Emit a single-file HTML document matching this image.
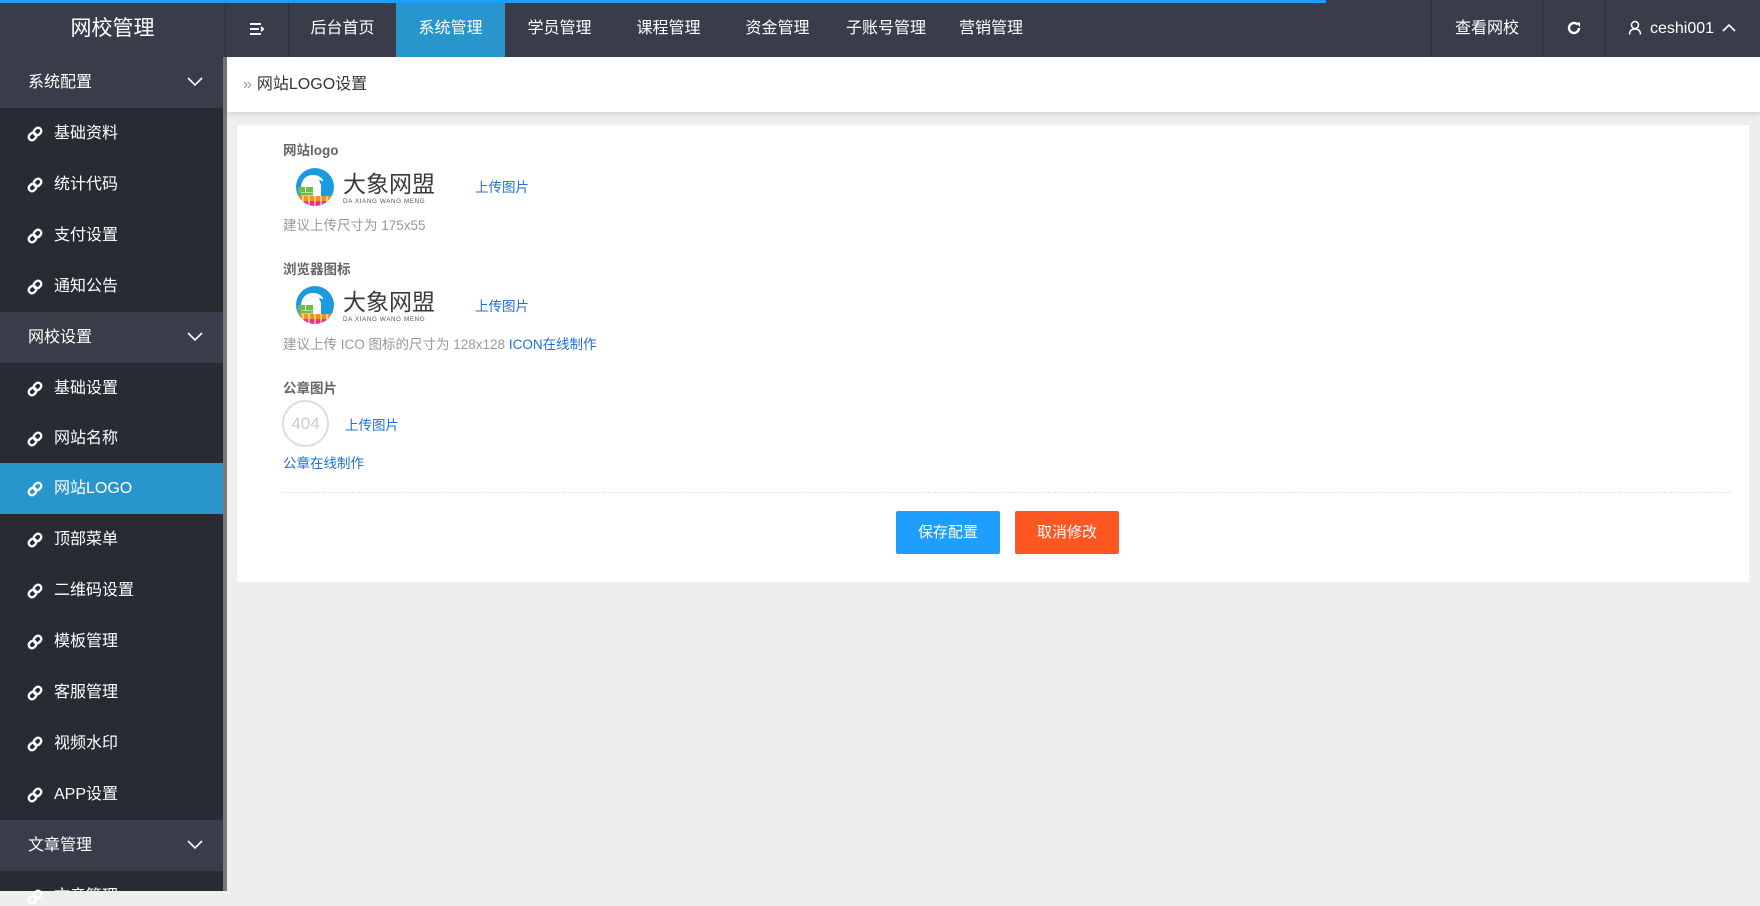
<!DOCTYPE html>
<html><head><meta charset="utf-8"><style>
*{margin:0;padding:0;box-sizing:border-box}
body{width:1760px;height:891px;overflow:hidden;background:#eeeeee;font-family:"Liberation Sans","Noto Sans CJK SC",sans-serif;position:relative}
.abs{position:absolute}
#hdr{left:0;top:0;width:1760px;height:57px;background:#393D49}
#bar{left:0;top:0;width:1326px;height:3px;background:#1E9FFF;z-index:5}
.nav{top:0;height:57px;color:#fff;font-size:16px;line-height:57px;text-align:center}
.sep{border-left:1px solid #2d303a}
#side{left:0;top:57px;width:223px;height:834px;background:#282B33;overflow:hidden}
.row{position:absolute;left:0;width:223px;height:51px;line-height:51px;color:#fff;font-size:16px}
.grp{background:#393D49;padding-left:28px}
.item{padding-left:54px}
.act{background:#2896CC}
.chev{position:absolute;right:20px;top:18px}
.lbl{position:absolute;left:283px;font-size:13.5px;font-weight:bold;color:#666}
.hint{position:absolute;left:283px;font-size:13.5px;color:#999}
.blue{color:#1E6FD9}
.up{position:absolute;font-size:13.5px;color:#1E6FD9}
.btn{position:absolute;top:511px;width:104px;height:43px;line-height:43px;text-align:center;color:#fff;font-size:15px;border-radius:2px}
</style></head><body>
<div id="bar" class="abs"></div>
<div id="hdr" class="abs"></div>
<div class="abs nav" style="left:0;width:225px;font-size:21px">网校管理</div>
<div class="abs nav sep" style="left:225px;width:63px"><svg width="16" height="14" style="margin-top:22px" viewBox="0 0 16 14"><path d="M1 2h11M1 7h9M1 12h11M12 5l2 2-2 2" stroke="#fff" stroke-width="2" fill="none"/></svg></div>
<div class="abs nav sep" style="left:288px;width:108px">后台首页</div>
<div class="abs nav" style="left:396px;width:109px;background:#2896CC">系统管理</div>
<div class="abs nav" style="left:505px;width:109px">学员管理</div>
<div class="abs nav" style="left:614px;width:109px">课程管理</div>
<div class="abs nav" style="left:723px;width:109px">资金管理</div>
<div class="abs nav" style="left:832px;width:108px">子账号管理</div>
<div class="abs nav" style="left:940px;width:102px">营销管理</div>
<div class="abs nav sep" style="left:1431px;width:111px">查看网校</div>
<div class="abs nav sep" style="left:1542px;width:63px"><svg width="16" height="16" style="margin-top:20px" viewBox="0 0 16 16"><path d="M13 8a5 5 0 1 1-1.5-3.6" stroke="#fff" stroke-width="2.4" fill="none"/><path d="M9.5 2.5h4.5v4.5z" fill="#fff"/></svg></div>
<div class="abs nav sep" style="left:1605px;width:155px;text-align:left;padding-left:22px"><svg width="14" height="15" viewBox="0 0 14 15" style="vertical-align:-2px;margin-right:8px"><circle cx="7" cy="5" r="3.5" stroke="#fff" stroke-width="1.5" fill="none"/><path d="M1.5 14.5c0-4 2.5-5.5 5.5-5.5s5.5 1.5 5.5 5.5" stroke="#fff" stroke-width="1.5" fill="none"/></svg>ceshi001<svg width="14" height="10" viewBox="0 0 14 10" style="margin-left:8px"><path d="M1 8l6-6 6 6" stroke="#fff" stroke-width="1.6" fill="none"/></svg></div>

<div id="side" class="abs">
<div class="row grp" style="top:0">系统配置<svg class="chev" width="16" height="12" viewBox="0 0 16 12"><path d="M1 3l7 7 7-7" stroke="#fff" stroke-width="1.6" fill="none"/></svg></div>
<div class="row item" style="top:51px">基础资料</div>
<div class="row item" style="top:102px">统计代码</div>
<div class="row item" style="top:153px">支付设置</div>
<div class="row item" style="top:204px">通知公告</div>
<div class="row grp" style="top:255px">网校设置<svg class="chev" width="16" height="12" viewBox="0 0 16 12"><path d="M1 3l7 7 7-7" stroke="#fff" stroke-width="1.6" fill="none"/></svg></div>
<div class="row item" style="top:306px">基础设置</div>
<div class="row item" style="top:356px">网站名称</div>
<div class="row item act" style="top:406px">网站LOGO</div>
<div class="row item" style="top:457px">顶部菜单</div>
<div class="row item" style="top:508px">二维码设置</div>
<div class="row item" style="top:559px">模板管理</div>
<div class="row item" style="top:610px">客服管理</div>
<div class="row item" style="top:661px">视频水印</div>
<div class="row item" style="top:712px">APP设置</div>
<div class="row grp" style="top:763px">文章管理<svg class="chev" width="16" height="12" viewBox="0 0 16 12"><path d="M1 3l7 7 7-7" stroke="#fff" stroke-width="1.6" fill="none"/></svg></div>
<div class="row item" style="top:814px">文章管理</div>
</div>
<div class="abs" style="left:223px;top:57px;width:4px;height:834px;background:#777"></div>

<div class="abs" style="left:227px;top:57px;width:1533px;height:55px;background:#fff;box-shadow:0 2px 5px rgba(0,0,0,.12)"></div>
<div class="abs" style="left:243px;top:57px;line-height:55px;font-size:16px;color:#333"><span style="color:#999;margin-right:5px">»</span>网站LOGO设置</div>

<svg width="0" height="0" style="position:absolute"><defs>
<clipPath id="c"><circle cx="20" cy="21" r="19"/></clipPath>
<symbol id="logo" viewBox="0 0 145 42"><g clip-path="url(#c)"><rect width="40" height="42" fill="#1a9be0"/><path d="M6 30V22c0-8 5-13 12-13 5 0 8 2 10 5v16z" fill="#fff"/><path d="M24 14c3 0 5 2 5 5v11h-3V19" fill="#1a9be0"/><rect x="3" y="21" width="7" height="5" fill="#6cbf3c"/><rect x="11" y="21" width="7" height="5" fill="#6cbf3c"/><rect x="3" y="26.5" width="15" height="3" fill="#6cbf3c"/><rect x="0" y="30" width="40" height="5" fill="#f39222"/><rect x="0" y="35.5" width="40" height="7" fill="#e4347f"/><path d="M8 30v12M14 30v12M20 30v12M26 30v12M32 30v12" stroke="#fff" stroke-width="1"/></g><text x="48" y="26" font-size="23" fill="#3a3a3a" font-family="Noto Sans CJK SC,sans-serif">大象网盟</text><text x="48" y="37" font-size="6.3" fill="#555" font-family="Liberation Sans" letter-spacing=".6">DA XIANG WANG MENG</text></symbol>
<symbol id="lk" viewBox="0 0 18 18"><g transform="rotate(-45 9 9)" stroke="#fff" stroke-width="2.4" fill="none"><rect x="1.5" y="5.8" width="8" height="6.4" rx="3.2"/><rect x="8.5" y="5.8" width="8" height="6.4" rx="3.2"/></g></symbol>
</defs></svg>

<div class="abs" style="left:237px;top:125px;width:1512px;height:457px;background:#fff"></div>
<div class="lbl" style="top:139px">网站logo</div>
<svg class="abs" style="left:295px;top:166px" width="145" height="42"><use href="#logo"/></svg>
<div class="up" style="left:475px;top:176px">上传图片</div>
<div class="hint" style="top:214px">建议上传尺寸为 175x55</div>
<div class="lbl" style="top:258px">浏览器图标</div>
<svg class="abs" style="left:295px;top:284px" width="145" height="42"><use href="#logo"/></svg>
<div class="up" style="left:475px;top:295px">上传图片</div>
<div class="hint" style="top:333px">建议上传 ICO 图标的尺寸为 128x128 <span class="blue">ICON在线制作</span></div>
<div class="lbl" style="top:377px">公章图片</div>
<div class="abs" style="left:282px;top:400px;width:47px;height:47px;border:2px solid #ddd;border-radius:50%;text-align:center;line-height:43px;color:#ccc;font-size:17px">404</div>
<div class="up" style="left:345px;top:414px">上传图片</div>
<div class="up" style="left:283px;top:452px">公章在线制作</div>
<div class="abs" style="left:282px;top:492px;width:1450px;border-top:1px dashed #e6e6e6"></div>
<div class="btn" style="left:896px;background:#1E9FFF">保存配置</div>
<div class="btn" style="left:1015px;background:#FF5722">取消修改</div>

<div class="abs" style="left:0;top:57px">
<svg class="abs" style="left:26px;top:68px" width="18" height="18"><use href="#lk"/></svg>
<svg class="abs" style="left:26px;top:119px" width="18" height="18"><use href="#lk"/></svg>
<svg class="abs" style="left:26px;top:170px" width="18" height="18"><use href="#lk"/></svg>
<svg class="abs" style="left:26px;top:221px" width="18" height="18"><use href="#lk"/></svg>
<svg class="abs" style="left:26px;top:323px" width="18" height="18"><use href="#lk"/></svg>
<svg class="abs" style="left:26px;top:373px" width="18" height="18"><use href="#lk"/></svg>
<svg class="abs" style="left:26px;top:423px" width="18" height="18"><use href="#lk"/></svg>
<svg class="abs" style="left:26px;top:474px" width="18" height="18"><use href="#lk"/></svg>
<svg class="abs" style="left:26px;top:525px" width="18" height="18"><use href="#lk"/></svg>
<svg class="abs" style="left:26px;top:576px" width="18" height="18"><use href="#lk"/></svg>
<svg class="abs" style="left:26px;top:627px" width="18" height="18"><use href="#lk"/></svg>
<svg class="abs" style="left:26px;top:678px" width="18" height="18"><use href="#lk"/></svg>
<svg class="abs" style="left:26px;top:729px" width="18" height="18"><use href="#lk"/></svg>
<svg class="abs" style="left:26px;top:831px" width="18" height="18"><use href="#lk"/></svg>
</div>
</body></html>
